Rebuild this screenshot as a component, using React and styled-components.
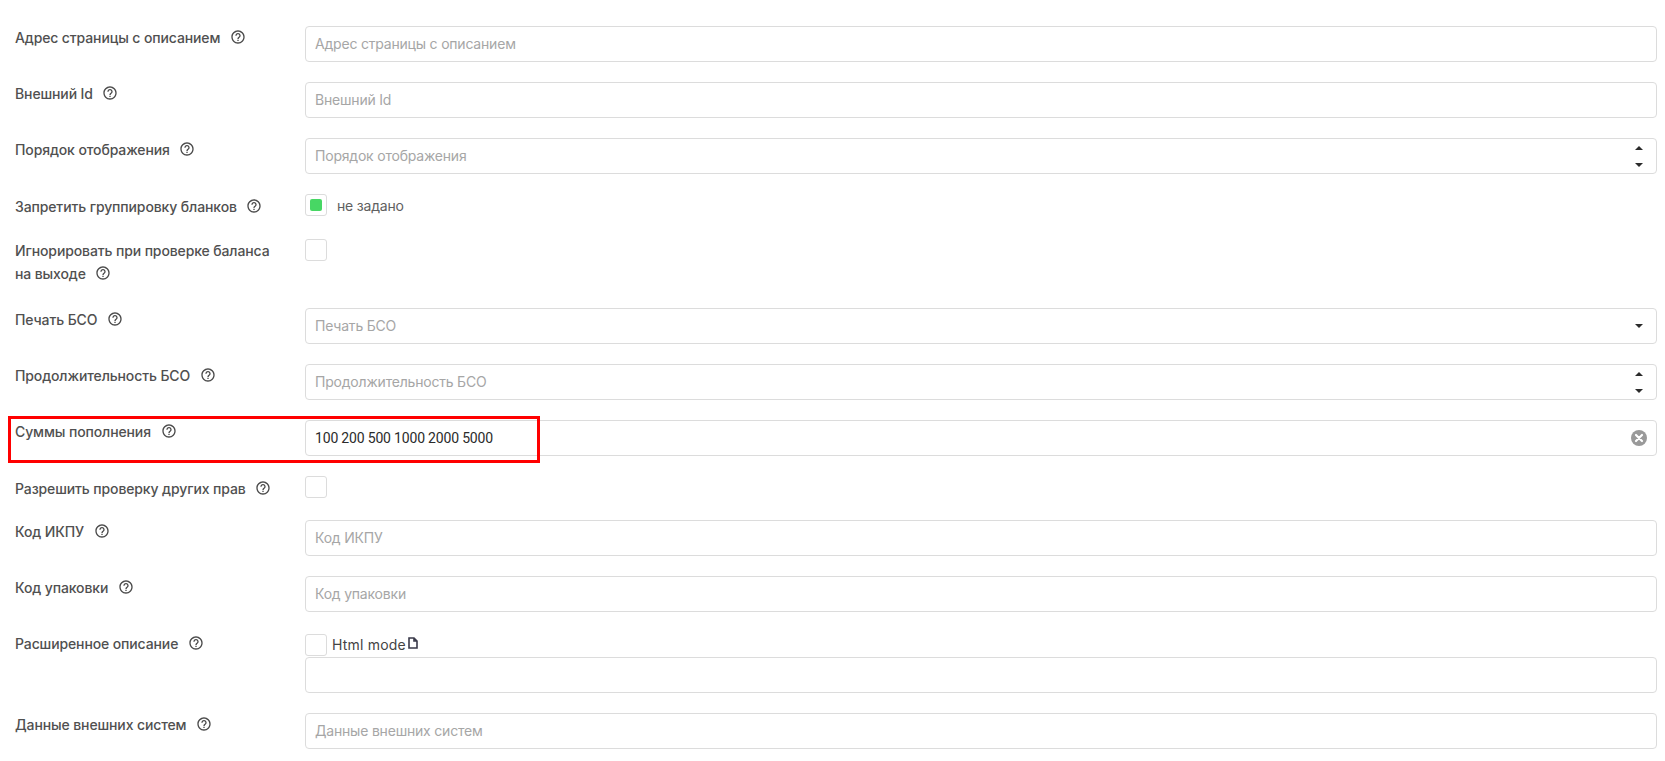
import React from "react";
import styled, { createGlobalStyle } from "styled-components";

const Global = createGlobalStyle`
  html, body { margin: 0; padding: 0; background: #fff; }
  body { font-family: Inter, "Noto Sans", sans-serif; font-size: 14px; color: #4a4a4a; }
  * { box-sizing: border-box; }
`;

const Page = styled.form`
  position: relative;
  padding: 26px 8px 0 15px;
  height: 761px;
  overflow: hidden;
`;

const Row = styled.div`
  display: grid;
  grid-template-columns: 290px 1fr;
  align-items: start;
  margin-bottom: ${(p) => p.$gap ?? 20}px;
`;

const Label = styled.label`
  display: block;
  width: 270px;
  padding-top: ${(p) => (p.$nudge ? 1 : 0)}px;
  margin-bottom: ${(p) => (p.$nudge ? -1 : 0)}px;
  font-weight: 500;
  line-height: 23px;
  letter-spacing: -0.12px;
  color: #505050;
`;

const HelpIcon = styled.svg`
  width: 16px;
  height: 16px;
  margin-left: 6px;
  vertical-align: -2px;
  fill: #4a4a4a;
`;

const Field = styled.div`
  position: relative;
  min-width: 0;
`;

const TextInput = styled.input`
  display: block;
  width: 100%;
  height: 36px;
  padding: 0 40px 2px 9px;
  border: 1px solid #dcdcdc;
  border-radius: 4px;
  background: #fff;
  font: 400 14px Inter, "Noto Sans", sans-serif;
  letter-spacing: -0.2px;
  color: #333;
  outline: none;
  &::placeholder { color: #a6a6a6; opacity: 1; }
`;

const ValueInput = styled(TextInput)`
  padding-bottom: 0;
  font: 400 14px Roboto, sans-serif;
  letter-spacing: -0.18px;
  color: #2b2b2b;
`;

const Area = styled(TextInput)`
  margin-top: 1px;
`;

const CheckLine = styled.div`
  display: flex;
  align-items: center;
  margin-top: ${(p) => p.$top ?? 0}px;
`;

const Box = styled.span`
  display: flex;
  align-items: center;
  justify-content: center;
  width: 22px;
  height: 22px;
  flex: none;
  border: 1px solid #dcdcdc;
  border-radius: 3px;
  background: #fff;
`;

const Mark = styled.span`
  width: 12px;
  height: 12px;
  border-radius: 2px;
  background: #47d764;
`;

const CheckText = styled.span`
  margin: 1px 0 -1px 10px;
  line-height: 22px;
  letter-spacing: -0.2px;
  color: #606060;
`;

const HtmlMode = styled.span`
  display: flex;
  align-items: flex-start;
  margin-left: 5px;
  line-height: 22px;
  letter-spacing: 0.2px;
  color: #444;
`;

const FileIcon = styled.svg`
  width: 10px;
  height: 12px;
  margin: 3px 0 0 2px;
  fill: none;
  stroke: #3a3a4a;
  stroke-width: 1.6;
`;

const Adorn = styled.div`
  position: absolute;
  top: 0;
  right: 14px;
  bottom: 0;
  width: 8px;
  display: flex;
  flex-direction: column;
  align-items: center;
  justify-content: center;
  gap: ${(p) => p.$gap ?? 0}px;
`;

const Arrow = styled.span`
  width: 0;
  height: 0;
  border-left: 4px solid transparent;
  border-right: 4px solid transparent;
  ${(p) => (p.$up ? "border-bottom: 4px solid #2b2b2b;" : "border-top: 4px solid #2b2b2b;")}
`;

const ClearIcon = styled.svg`
  position: absolute;
  top: 10px;
  right: 10px;
  width: 16px;
  height: 16px;
`;

const Highlight = styled.div`
  position: absolute;
  left: 8px;
  top: 416px;
  width: 532px;
  height: 47px;
  border: 3px solid #f00;
  pointer-events: none;
`;

const Help = () => (
  <HelpIcon viewBox="0 0 24 24" aria-hidden="true">
    <path d="M11 18h2v-2h-2v2zm1-16C6.48 2 2 6.48 2 12s4.48 10 10 10 10-4.48 10-10S17.52 2 12 2zm0 18c-4.41 0-8-3.59-8-8s3.59-8 8-8 8 3.59 8 8-3.59 8-8 8zm0-14c-2.21 0-4 1.79-4 4h2c0-1.1.9-2 2-2s2 .9 2 2c0 2-3 1.75-3 5h2c0-2.25 3-2.5 3-5 0-2.21-1.79-4-4-4z" />
  </HelpIcon>
);

const InputRow = ({ label, adorn, value }) => (
  <Row>
    <Label>{label} <Help /></Label>
    <Field>
      {value ? <ValueInput defaultValue={value} /> : <TextInput placeholder={label} />}
      {adorn === "spin" && (
        <Adorn $gap={13}><Arrow $up /><Arrow /></Adorn>
      )}
      {adorn === "caret" && (
        <Adorn><Arrow /></Adorn>
      )}
      {adorn === "clear" && (
        <ClearIcon viewBox="0 0 16 16">
          <circle cx="8" cy="8" r="8" fill="#999" />
          <path d="M5 5l6 6M11 5l-6 6" stroke="#fff" strokeWidth="2.2" strokeLinecap="round" />
        </ClearIcon>
      )}
    </Field>
  </Row>
);

const CheckRow = ({ label, text, gap, nudge }) => (
  <Row $gap={gap}>
    <Label $nudge={nudge}>{label} <Help /></Label>
    <CheckLine>
      <Box>{text && <Mark />}</Box>
      {text && <CheckText>{text}</CheckText>}
    </CheckLine>
  </Row>
);

export default function App() {
  return (
    <>
      <Global />
      <Page>
        <InputRow label="Адрес страницы с описанием" />
        <InputRow label="Внешний Id" />
        <InputRow label="Порядок отображения" adorn="spin" />
        <CheckRow label="Запретить группировку бланков" text="не задано" gap={22} nudge />
        <CheckRow label="Игнорировать при проверке баланса на выходе" gap={23} />
        <InputRow label="Печать БСО" adorn="caret" />
        <InputRow label="Продолжительность БСО" adorn="spin" />
        <InputRow label="Суммы пополнения" adorn="clear" value="100 200 500 1000 2000 5000" />
        <CheckRow label="Разрешить проверку других прав" gap={21} nudge />
        <InputRow label="Код ИКПУ" />
        <InputRow label="Код упаковки" />
        <Row>
          <Label>Расширенное описание <Help /></Label>
          <Field>
            <CheckLine $top={2}>
              <Box />
              <HtmlMode>
                Html mode
                <FileIcon viewBox="0 0 10 12">
                  <path d="M1 1h5l3 3v7H1z M6 1v3h3" />
                </FileIcon>
              </HtmlMode>
            </CheckLine>
            <Area />
          </Field>
        </Row>
        <InputRow label="Данные внешних систем" />
        <Highlight />
      </Page>
    </>
  );
}
